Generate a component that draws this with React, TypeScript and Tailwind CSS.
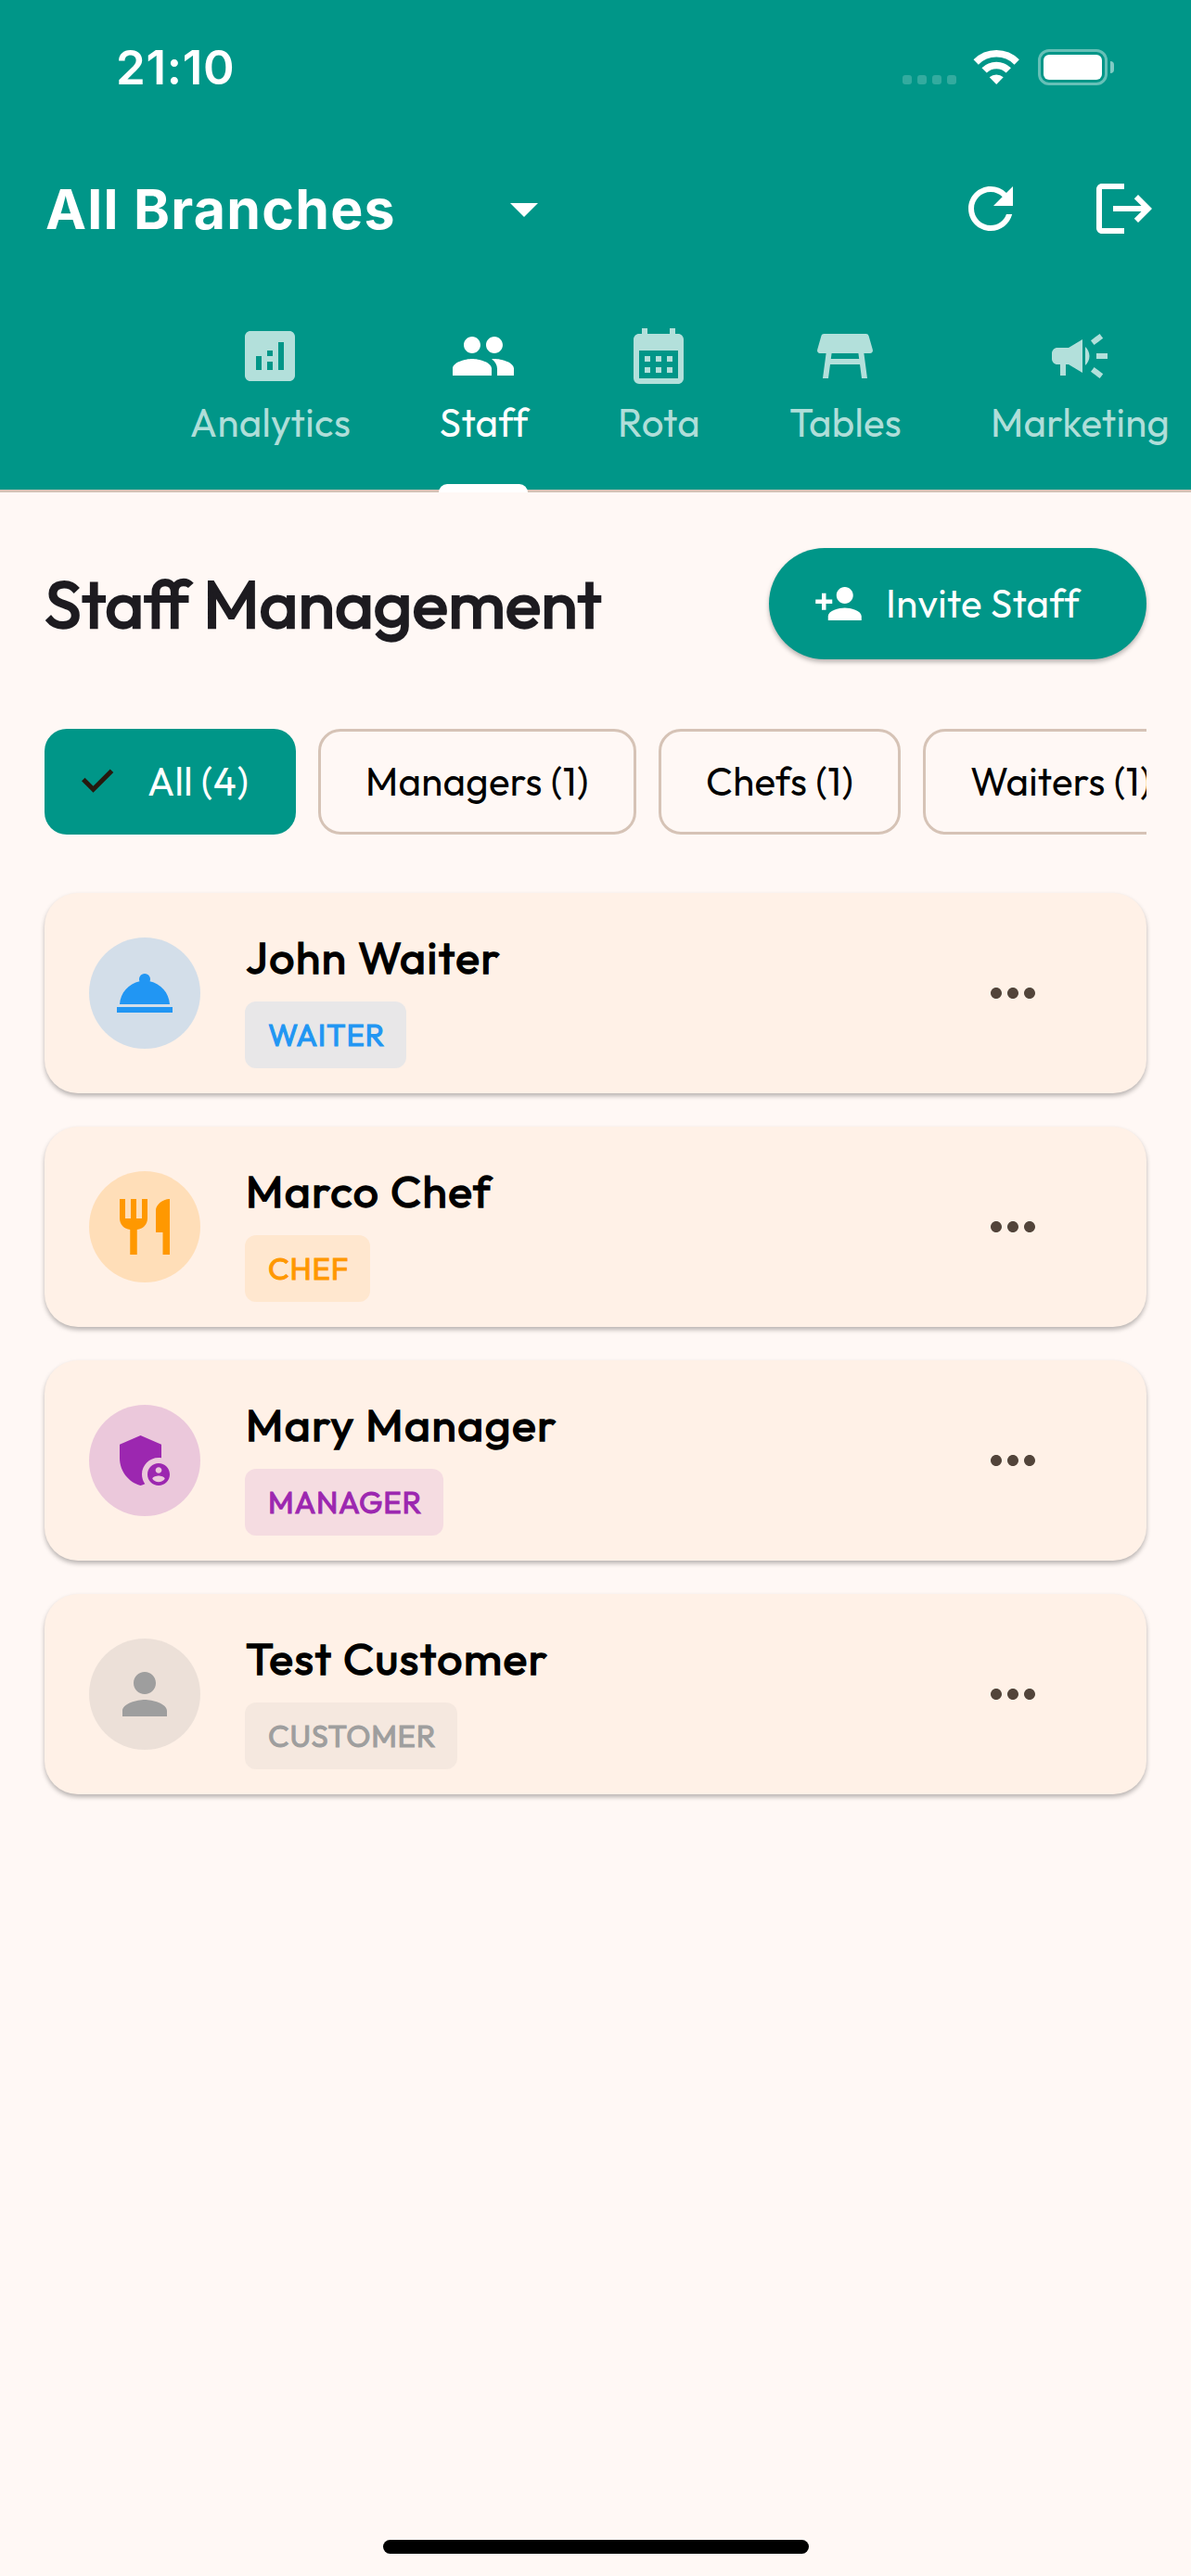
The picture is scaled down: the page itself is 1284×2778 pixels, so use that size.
import type { IconType } from "react-icons";
import {
  MdAdminPanelSettings,
  MdAnalytics,
  MdArrowDropDown,
  MdCalendarMonth,
  MdCampaign,
  MdLogout,
  MdMoreHoriz,
  MdPeople,
  MdPerson,
  MdPersonAdd,
  MdRefresh,
  MdRestaurant,
  MdRoomService,
  MdTableRestaurant,
} from "react-icons/md";
import clsx from "clsx";

const tabs: { label: string; icon: IconType; width: string; active?: boolean }[] = [
  { label: "Analytics", icon: MdAnalytics, width: "w-[173px]" },
  { label: "Staff", icon: MdPeople, width: "w-[96px]", active: true },
  { label: "Rota", icon: MdCalendarMonth, width: "w-[89px]" },
  { label: "Tables", icon: MdTableRestaurant, width: "w-[121px]" },
  { label: "Marketing", icon: MdCampaign, width: "w-[193px]" },
];

const filters = [
  { label: "Managers (1)", width: "w-[343px]" },
  { label: "Chefs (1)", width: "w-[261px]" },
  { label: "Waiters (1)", width: "w-[298px]" },
];

const staff: { name: string; role: string; icon: IconType; color: string; avatar: string; badge: string }[] = [
  {
    name: "John Waiter",
    role: "WAITER",
    icon: MdRoomService,
    color: "text-[#2196f3]",
    avatar: "bg-[#2196f333]",
    badge: "bg-[#2196f31a]",
  },
  {
    name: "Marco Chef",
    role: "CHEF",
    icon: MdRestaurant,
    color: "text-[#ff9800]",
    avatar: "bg-[#ff980033]",
    badge: "bg-[#ff98001a]",
  },
  {
    name: "Mary Manager",
    role: "MANAGER",
    icon: MdAdminPanelSettings,
    color: "text-[#9c27b0]",
    avatar: "bg-[#9c27b033]",
    badge: "bg-[#9c27b01a]",
  },
  {
    name: "Test Customer",
    role: "CUSTOMER",
    icon: MdPerson,
    color: "text-[#9e9e9e]",
    avatar: "bg-[#9e9e9e33]",
    badge: "bg-[#9e9e9e1a]",
  },
];

function StatusBar() {
  return (
    <div className="flex h-[141px] items-center justify-between pt-1 pr-[83px] pl-[125px]">
      <span className="font-['Inter',sans-serif] text-[51px] leading-none font-semibold tracking-[0.7px]">
        21:10
      </span>
      <div className="flex items-center">
        <div className="mt-[27px] flex gap-1.5">
          {[0, 1, 2, 3].map((i) => (
            <span key={i} className="size-2.5 rounded-[3px] bg-white/20" />
          ))}
        </div>
        <svg className="ml-[18px] h-[37px] w-[51px]" viewBox="0 0 51 37" fill="none">
          <path d="M3.2 13A31 31 0 0 1 47.2 13" stroke="white" strokeWidth="7.5" />
          <path d="M12.1 21.9A18.5 18.5 0 0 1 38.3 21.9" stroke="white" strokeWidth="7.5" />
          <path d="M25.2 37L17.7 29.3A11.5 11.5 0 0 1 32.7 29.3Z" fill="white" />
        </svg>
        <div className="ml-[19px] h-[39px] w-[75px] rounded-[12px] border-[3px] border-white/40 p-[3px]">
          <div className="h-full w-full rounded-[6px] bg-white" />
        </div>
        <span className="ml-[3px] h-[13px] w-1 rounded-r-full bg-white/50" />
      </div>
    </div>
  );
}

function AppBar() {
  return (
    <div className="flex h-[168px] items-center pr-9 pl-[49px]">
      <span className="w-[480px] font-['Inter',sans-serif] text-[59px] leading-none font-[650] tracking-[1.25px] whitespace-nowrap">
        All Branches
      </span>
      <MdArrowDropDown className="size-[72px]" />
      <MdRefresh className="ml-auto size-[72px]" />
      <MdLogout className="ml-[72px] size-[72px]" />
    </div>
  );
}

function TabBar() {
  return (
    <div className="relative flex h-[222px] gap-24 overflow-hidden border-b-[3px] border-[#d6c3b6] pl-[204px]">
      {tabs.map(({ label, icon: Icon, width, active }) => (
        <div
          key={label}
          className={clsx("flex shrink-0 flex-col items-center pt-[39px]", width, active ? "text-white" : "text-white/70")}
        >
          <Icon className="size-[72px]" />
          <span className="mt-[9px] pl-0.5 text-[42px] leading-[53px] tracking-[0.3px] whitespace-nowrap">{label}</span>
        </div>
      ))}
    </div>
  );
}

function StaffCard({ name, role, icon: Icon, color, avatar, badge }: (typeof staff)[number]) {
  return (
    <div className="flex h-[216px] rounded-[36px] bg-[#fff1e7] pr-[108px] pl-12 shadow-[0_3px_5px_rgba(0,0,0,0.28)]">
      <div className={clsx("mt-12 flex size-[120px] items-center justify-center rounded-full", avatar)}>
        <Icon className={clsx("size-[72px]", color)} />
      </div>
      <div className="ml-12 flex flex-col items-start pt-10">
        <span className="pl-px text-[48px] leading-[58px] tracking-[1.5px] text-black [-webkit-text-stroke:1.5px]">
          {name}
        </span>
        <span
          className={clsx(
            "mt-[19px] rounded-[12px] pr-[23px] pl-[25px] text-[33px] leading-[72px] tracking-[0.75px] [-webkit-text-stroke:1px]",
            badge,
            color
          )}
        >
          {role}
        </span>
      </div>
      <MdMoreHoriz className="ml-auto size-[72px] self-center text-[#52443a]" />
    </div>
  );
}

export default function App() {
  return (
    <div className="flex h-[2778px] w-[1284px] flex-col overflow-hidden bg-[#fff8f5] font-['Outfit','Lato',sans-serif]">
      <header className="relative bg-[#009688] text-white">
        <StatusBar />
        <AppBar />
        <TabBar />
        {/* active tab indicator, sits over the divider */}
        <span className="absolute bottom-0 left-[473px] h-[9px] w-24 rounded-t-[9px] bg-white" />
      </header>

      <main className="px-12 pt-[60px]">
        <div className="flex h-[120px] items-center justify-between">
          <h1 className="text-[72px] leading-none font-normal whitespace-nowrap text-[#1d1b20] [-webkit-text-stroke:2.25px]">
            Staff Management
          </h1>
          <button className="flex h-[120px] w-[407px] items-center rounded-full bg-[#009688] pl-12 text-white shadow-[0_3px_5px_rgba(0,0,0,0.28)]">
            <MdPersonAdd className="size-[54px]" />
            <span className="ml-6 text-[42px] leading-none tracking-[0.3px] whitespace-nowrap">Invite Staff</span>
          </button>
        </div>

        <div className="mt-[75px] flex gap-6 overflow-hidden text-[42px] leading-none tracking-[0.3px] whitespace-nowrap text-black">
          <div className="flex h-[114px] w-[271px] shrink-0 items-center rounded-[24px] bg-[#009688] pl-[38px] text-white">
            <svg className="h-[30px] w-[38px]" viewBox="0 0 38 30" fill="none">
              <path d="M3.8 12.6L14.5 23.3L34.5 3.3" stroke="#27190e" strokeWidth="5" />
            </svg>
            <span className="ml-[35px]">All (4)</span>
          </div>
          {filters.map(({ label, width }) => (
            <div
              key={label}
              className={clsx(
                "flex h-[114px] shrink-0 items-center rounded-[24px] border-[3px] border-[#d6c3b6] pl-12",
                width
              )}
            >
              {label}
            </div>
          ))}
        </div>

        <div className="mt-[63px] flex flex-col gap-9">
          {staff.map((member) => (
            <StaffCard key={member.name} {...member} />
          ))}
        </div>
      </main>

      <div className="mx-auto mt-auto mb-6 h-[15px] w-[459px] rounded-full bg-black" />
    </div>
  );
}
